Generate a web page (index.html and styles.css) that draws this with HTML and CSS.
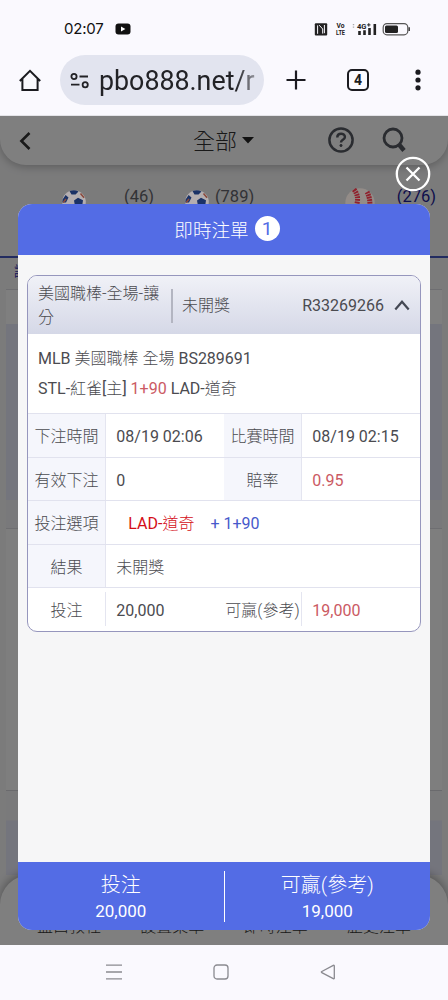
FILE: index.html
```html
<!DOCTYPE html>
<html lang="zh-Hant">
	<head>
		<meta charset="UTF-8">
		<meta name="viewport" content="width=device-width, initial-scale=1">
		<title>即時注單</title>
		<link rel="stylesheet" href="styles.css">
	</head>
	<body>
		<div class="status">
			<span class="clock">02:07</span>
			<svg class="youtube" width="16" height="12" viewBox="0 0 16 12"><rect x="0.5" y="0.5" width="15" height="11" rx="3" fill="#111"/><path d="M6 3.6v4.8L10.4 6z" fill="#fff"/></svg>
			<svg class="signals" width="98" height="18" viewBox="0 0 98 18">
				<rect x="0.8" y="3.2" width="12.4" height="12.2" rx="1" fill="#222"/>
				<path d="M3.6 13.8V5.4M10.4 13.2V5" fill="none" stroke="#faf9fe" stroke-width="1"/>
				<path d="M5.2 5.2L8.7 9V13.6" fill="none" stroke="#faf9fe" stroke-width="1"/>
				<text x="22.5" y="8.4" class="tiny" textLength="8" lengthAdjust="spacingAndGlyphs">Vo</text>
				<text x="22" y="15.2" class="tiny" textLength="9" lengthAdjust="spacingAndGlyphs">LTE</text>
				<path d="M39.5 4v1.3M39.5 6.5v1.3" stroke="#aaa" stroke-width="1.4"/>
				<text x="43" y="8.8" class="tiny big" textLength="9.5" lengthAdjust="spacingAndGlyphs">4G</text>
				<path d="M54.8 3.2v3.4M53.1 4.9h3.4" stroke="#222" stroke-width="1"/>
				<path d="M45.5 11v4M50.5 10.3v4.7M55.5 8v7M60.8 4v11" stroke="#222" stroke-width="2.6"/>
				<rect x="69.2" y="3.6" width="24.6" height="11.2" rx="3.8" fill="none" stroke="#555" stroke-width="1.2"/>
				<rect x="71" y="5.5" width="13" height="7.4" rx="1.5" fill="#222"/>
				<path d="M95.2 7.3v3.8" stroke="#333" stroke-width="1.4"/>
			</svg>
		</div>
		<div class="browser">
			<svg class="home" width="24" height="24" viewBox="0 0 24 24" fill="none" stroke="#1b1b20" stroke-width="2"><path d="M1.8 13L12 2.8L22.2 13M4.4 11v11h15.2V11"/></svg>
			<div class="address">
				<svg width="20" height="18" viewBox="0 0 20 18" fill="none" stroke="#222226" stroke-width="1.8"><circle cx="4" cy="4.5" r="2.6"/><path d="M9.5 4.5H18M1 12.7h8.5"/><circle cx="15.2" cy="12.7" r="2.6"/></svg>
				<span class="url">pbo888.net/r</span>
			</div>
			<svg class="plus" width="22" height="22" viewBox="0 0 22 22" stroke="#1b1b20" stroke-width="2.2"><path d="M11 1.5v19M1.5 11h19"/></svg>
			<span class="tab-count">4</span>
			<svg class="dots" width="6" height="22" viewBox="0 0 6 22" fill="#1b1b20"><circle cx="3" cy="3.2" r="2.6"/><circle cx="3" cy="11" r="2.6"/><circle cx="3" cy="18.8" r="2.6"/></svg>
		</div>

		<div class="page">
			<div class="topbar">
				<svg class="back" width="14" height="20" viewBox="0 0 14 20" fill="none" stroke="#333" stroke-width="2.6"><path d="M11.5 2L3.4 10l8.1 8"/></svg>
				<span class="all zh">全部</span>
				<svg class="caret" width="12" height="7" viewBox="0 0 12 7" fill="#222"><path d="M0 0h12L6 6.5z"/></svg>
				<svg class="help" width="28" height="28" viewBox="0 0 28 28" fill="none" stroke="#555861" stroke-width="2.5"><circle cx="14" cy="14" r="11.6"/><path d="M10.3 11.5c0-5 7.6-4.7 7.6-.6 0 2.9-3.9 2.9-3.9 5.5"/><circle cx="14" cy="19.5" r="1.1" fill="#555861" stroke-width="1"/></svg>
				<svg class="search" width="26" height="28" viewBox="0 0 26 28" fill="none" stroke="#555861" stroke-width="2.8"><circle cx="12" cy="12" r="9"/><path d="M18 18.5l5 6" stroke-width="4.4"/></svg>
			</div>
			<div class="sports">
				<svg class="ball" width="24" height="24" viewBox="0 0 24 24"><circle cx="12" cy="12" r="11.8" fill="#b4aeb0"/><path d="M7.5 1q5-1.8 9 .4l-3 3h-4zM.6 9.6L3.6 5 6.5 7.6 4 12.5H.3zM12 10.4l4-2.6 5 2.4L20 17l-7-1z" fill="#1b3266"/><path d="M1.2 12.4L4 9M18.5 3.4l3.6 4.4" stroke="#8a4a3c" stroke-width="1.6" fill="none"/></svg>
				<span class="num">(46)</span>
				<svg class="ball second" width="24" height="24" viewBox="0 0 24 24"><circle cx="12" cy="12" r="11.8" fill="#b4aeb0"/><path d="M7.5 1q5-1.8 9 .4l-3 3h-4zM.6 9.6L3.6 5 6.5 7.6 4 12.5H.3zM12 10.4l4-2.6 5 2.4L20 17l-7-1z" fill="#1b3266"/><path d="M1.2 12.4L4 9M18.5 3.4l3.6 4.4" stroke="#8a4a3c" stroke-width="1.6" fill="none"/></svg>
				<span class="num near">(789)</span>
				<svg class="baseball" width="30" height="30" viewBox="0 0 30 30"><circle cx="15" cy="15" r="14.7" fill="#938c88"/><path d="M9 1.5q5 6 3 14M22 4q3 5 3 14" stroke="#90202c" stroke-width="5" stroke-dasharray="1.8 .8" fill="none"/></svg>
				<span class="num on">(276)</span>
			</div>
			<div class="leagues">讓分</div>
			<div class="group"></div>
			<div class="group tall"></div>
			<div class="group last"></div>
			<div class="menu zh">
				<span>盤口教程</span>
				<span>設置菜單</span>
				<span>即時注單</span>
				<span>歷史注單</span>
			</div>

			<div class="mask"></div>
			<svg class="close" width="36" height="36" viewBox="0 0 36 36" fill="none" stroke="#fff" stroke-width="2.3"><circle cx="18" cy="18" r="16.2"/><path d="M11.5 11.5l13 13M24.5 11.5l-13 13"/></svg>
			<div class="modal">
				<div class="title zh">即時注單<span class="badge">1</span></div>
				<div class="content">
					<div class="ticket">
						<div class="head">
							<div class="kind zh">美國職棒-全場-讓分</div>
							<div class="state zh">未開獎</div>
							<div class="serial">R33269266</div>
							<svg width="16" height="12" viewBox="0 0 16 12" fill="none" stroke="#444854" stroke-width="2.2"><path d="M1.3 9.5L8 1.8l6.7 7.7"/></svg>
						</div>
						<div class="match">
							<p>MLB <span class="zh">美國職棒 全場</span> BS289691</p>
							<p>STL-<span class="zh">紅雀</span>[<span class="zh">主</span>] <span class="red">1+90</span> LAD-<span class="zh">道奇</span></p>
						</div>
						<div class="row">
							<div class="label zh">下注時間</div>
							<div class="value">08/19 02:06</div>
							<div class="label zh">比賽時間</div>
							<div class="value">08/19 02:15</div>
						</div>
						<div class="row short">
							<div class="label zh">有效下注</div>
							<div class="value">0</div>
							<div class="label zh">賠率</div>
							<div class="value red">0.95</div>
						</div>
						<div class="row">
							<div class="label zh">投注選項</div>
							<div class="value wide"><span class="pick">LAD-<span class="zh">道奇</span></span><span class="line">+ 1+90</span></div>
						</div>
						<div class="row short">
							<div class="label zh">結果</div>
							<div class="value wide zh">未開獎</div>
						</div>
						<div class="row short sum">
							<div class="label zh">投注</div>
							<div class="value">20,000</div>
							<div class="label zh">可贏(參考)</div>
							<div class="value red">19,000</div>
						</div>
					</div>
				</div>
				<div class="total">
					<div class="col"><span class="name zh">投注</span><span class="money">20,000</span></div>
					<div class="col"><span class="name zh">可贏(參考)</span><span class="money">19,000</span></div>
				</div>
			</div>
		</div>

		<div class="sysnav">
			<svg width="16" height="16" viewBox="0 0 16 16" stroke="#8a8a90" stroke-width="1.3"><path d="M0 1.2h16M0 8h16M0 14.8h16"/></svg>
			<svg width="16" height="16" viewBox="0 0 16 16" fill="none" stroke="#8a8a90" stroke-width="1.3"><rect x="1" y="1" width="14" height="14" rx="3"/></svg>
			<svg width="16" height="16" viewBox="0 0 16 16" fill="none" stroke="#8a8a90" stroke-width="1.3" stroke-linejoin="round"><path d="M14.3 1.8v12.4q0 .8-1 .4L1.8 8.7q-1-.6 0-1.2L13.3 1.4q1-.4 1 .4z"/></svg>
		</div>
	</body>
</html>
```
FILE: styles.css
```css
* {
	margin: 0;
	padding: 0;
	box-sizing: border-box;
}

body {
	width: 448px;
	height: 1000px;
	overflow: hidden;
	background: #faf9fe;
	color: #4b4b50;
	font-family: Roboto, "Noto Sans CJK TC", sans-serif;
	font-size: 16px;
}

svg {
	display: block;
	flex: none;
}

.zh {
	font-weight: 300;
}

.red {
	color: #cb5a63;
}

/* phone status bar */
.status {
	display: flex;
	align-items: center;
	height: 55px;
	padding: 2px 36px 0 64px;
}

.clock {
	color: #111;
	font-family: Inter, sans-serif;
	font-size: 15px;
	letter-spacing: -0.2px;
	width: 51px;
}

.signals {
	margin-left: auto;
}

.tiny {
	font-family: Roboto, sans-serif;
	font-size: 7px;
	font-weight: 700;
	fill: #222;
}

.tiny.big {
	font-size: 8px;
}

/* browser bar */
.browser {
	display: flex;
	align-items: flex-start;
	height: 61px;
	padding-left: 18px;
	border-bottom: 1px solid #e4e4e8;
}

.home {
	margin-top: 13px;
}

.address {
	display: flex;
	align-items: center;
	width: 204px;
	height: 50px;
	margin-left: 18px;
	padding: 2px 9px 0 10px;
	border-radius: 25px;
	background: #e2e4ef;
}

.url {
	flex: 1;
	margin-left: 9px;
	overflow: hidden;
	color: #222226;
	font-size: 26.8px;
	white-space: nowrap;
	mask-image: linear-gradient(to right, #000 88%, rgba(0, 0, 0, .4));
}

.plus {
	margin: 14px 0 0 21px;
}

.tab-count {
	width: 22px;
	height: 22px;
	margin: 14px 0 0 40px;
	border: 2px solid #1b1b20;
	border-radius: 5px;
	color: #1b1b20;
	font-size: 14px;
	font-weight: 700;
	line-height: 19px;
	text-align: center;
}

.dots {
	margin: 14px 0 0 46px;
}

/* page behind the dialog */
.page {
	position: relative;
	height: 829px;
	overflow: hidden;
	background: #f6f6f7;
}

.topbar {
	display: flex;
	align-items: center;
	height: 49px;
	padding: 0 41px 0 18px;
	border-radius: 0 0 26px 26px;
	background: #fff;
	box-shadow: 0 2px 8px rgba(0, 0, 0, .25);
}

.all {
	margin: -3px 0 0 161px;
	color: #333;
	font-size: 22px;
}

.caret {
	margin-left: 5px;
}

.help {
	margin: -2px 0 0 73px;
}

.search {
	margin: -2px 0 0 auto;
}

.sports {
	display: flex;
	align-items: flex-start;
	height: 93px;
	padding: 21px 12px 0 62px;
	border-bottom: 2px solid #4556c0;
}

.ball,
.baseball {
	position: relative;
	z-index: 1;
}

.ball {
	margin-top: 4px;
}

.second {
	margin-left: 31px;
}

.num {
	margin: 1px 0 0 38px;
	color: #65656c;
	font-size: 16.5px;
	line-height: 20px;
}

.num.near {
	margin-left: 6px;
}

.num.on {
	margin-left: auto;
	color: #1a1a96;
}

.baseball {
	margin: 2px 0 0 91px;
}

.leagues {
	height: 31px;
	padding-left: 14px;
	color: #2a2ab0;
	font-size: 14px;
	line-height: 26px;
}

.group {
	height: 239px;
	margin: 0 6px;
	border-top: 1px solid #dcdce2;
	background: linear-gradient(#fff 34px, #e9eafa 34px, #e9eafa 210px, #f3f3f6 210px);
}

.group.tall {
	height: 262px;
	background: #fcfcfd;
}

.group.last {
	height: 85px;
	border-top: 1px solid #d4d4da;
	background: linear-gradient(#f4f4f7 29px, #e9eafa 30px);
}

.menu {
	display: flex;
	justify-content: space-between;
	height: 80px;
	padding: 40px 37px 0;
	border-radius: 30px 30px 0 0;
	background: #fff;
	box-shadow: 0 -3px 8px rgba(0, 0, 0, .3);
	color: #333;
	line-height: 24px;
}

/* dialog */
.mask {
	position: absolute;
	inset: 0;
	background: rgba(0, 0, 0, .5);
}

.close {
	position: absolute;
	z-index: 2;
	top: 40px;
	left: 395px;
}

.modal {
	position: absolute;
	z-index: 2;
	top: 88px;
	left: 18px;
	display: flex;
	flex-direction: column;
	width: 412px;
	height: 726px;
	overflow: hidden;
	border-radius: 14px;
	background: #f6f6f7;
}

.title {
	display: flex;
	align-items: center;
	justify-content: center;
	gap: 6px;
	height: 51px;
	padding: 0 0 2px 6px;
	background: #536ce5;
	color: #fff;
	font-size: 18.6px;
}

.badge {
	width: 25px;
	height: 25px;
	border-radius: 50%;
	background: #fff;
	color: #536ce5;
	font-size: 19px;
	font-weight: 400;
	line-height: 26px;
	text-align: center;
}

.content {
	flex: 1;
	padding: 20px 9px;
}

.ticket {
	overflow: hidden;
	border: 1px solid #9696bd;
	border-radius: 10px;
	background: #fff;
}

.head {
	display: flex;
	align-items: center;
	height: 58px;
	padding: 1px 10px 0;
	background: linear-gradient(#f0f1f7, #d5d8e7);
	line-height: 24px;
}

.kind {
	width: 124px;
}

.state {
	margin-left: 9px;
	padding-left: 9px;
	border-left: 2px solid #b3b5c1;
	line-height: 34px;
}

.serial {
	margin: 0 10px 0 auto;
}

.match {
	height: 79px;
	padding: 10px 10px 0;
	line-height: 30px;
}

.row {
	display: grid;
	grid-template-columns: 78px 118px 78px 1fr;
	grid-template-rows: 43px;
	border-top: 1px solid #e1e2ee;
	line-height: 45px;
}

.row.short {
	grid-template-rows: 42px;
}

.label {
	border-right: 1px solid #e4e5f0;
	background: #f5f6fc;
	text-align: center;
	white-space: nowrap;
}

.value {
	padding-left: 10.3px;
}

.wide {
	grid-column: span 3;
}

.pick {
	margin-left: 12px;
	color: #d40d16;
}

.line {
	margin-left: 16px;
	color: #4759cb;
}

.row.sum {
	grid-template-rows: 43px;
}

.sum .label {
	height: 34px;
	margin-top: 4px;
	background: none;
	line-height: 37px;
}

.total {
	display: flex;
	align-items: center;
	height: 68px;
	background: #536ce5;
	color: #fff;
}

.col {
	display: flex;
	flex: 1;
	flex-direction: column;
	align-items: center;
	height: 51px;
}

.col + .col {
	border-left: 1px solid #fff;
}

.name {
	font-size: 20px;
	line-height: 28px;
}

.money {
	font-size: 17px;
	line-height: 24px;
}

/* system buttons */
.sysnav {
	display: flex;
	gap: 91px;
	height: 55px;
	padding: 19px 0 0 106px;
}
```
